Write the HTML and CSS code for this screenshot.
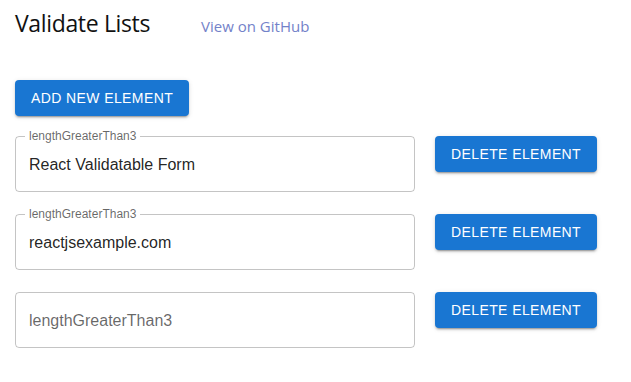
FILE: index.html
```html
<!DOCTYPE html>
<html lang="en">
<head>
<meta charset="utf-8">
<title>Validate Lists</title>
<link rel="stylesheet" href="styles.css">
</head>
<body>
<div class="page">
  <header class="header">
    <h1 class="title">Validate Lists</h1>
    <a class="link" href="#">View on GitHub</a>
  </header>
  <button class="btn btn-add" type="button">Add new element</button>
  <div class="list">
    <div class="row">
      <div class="field">
        <span class="field-label">lengthGreaterThan3</span>
        <span class="field-value">React Validatable Form</span>
      </div>
      <button class="btn" type="button">Delete element</button>
    </div>
    <div class="row">
      <div class="field">
        <span class="field-label">lengthGreaterThan3</span>
        <span class="field-value">reactjsexample.com</span>
      </div>
      <button class="btn" type="button">Delete element</button>
    </div>
    <div class="row">
      <div class="field">
        <span class="field-placeholder">lengthGreaterThan3</span>
      </div>
      <button class="btn" type="button">Delete element</button>
    </div>
  </div>
</div>
</body>
</html>
```

FILE: styles.css
```css
html, body {
  margin: 0;
  padding: 0;
  background: #ffffff;
}

.page {
  padding: 7px 15px 0 15px;
  display: flex;
  flex-direction: column;
  align-items: flex-start;
}

.header {
  display: flex;
  align-items: baseline;
  height: 32px;
}

.title {
  margin: 0;
  font-family: "Open Sans", sans-serif;
  font-weight: 400;
  font-size: 23px;
  letter-spacing: -0.35px;
  line-height: 32px;
  color: #111111;
}

.link {
  margin-left: 51px;
  font-family: "Open Sans", sans-serif;
  font-size: 15px;
  line-height: 32px;
  color: #7382c9;
  text-decoration: none;
}

.btn {
  font-family: "Liberation Sans", Arial, sans-serif;
  font-size: 14px;
  font-weight: 400;
  letter-spacing: 0.4px;
  line-height: 24px;
  text-transform: uppercase;
  color: #ffffff;
  background: #1976d2;
  border: 0;
  border-radius: 4px;
  padding: 6px 16px;
  margin: 0;
  box-shadow: 0px 3px 1px -2px rgba(0,0,0,0.2), 0px 2px 2px 0px rgba(0,0,0,0.14), 0px 1px 5px 0px rgba(0,0,0,0.12);
  cursor: pointer;
  white-space: nowrap;
}

.btn-add {
  margin-top: 41px;
}

.list {
  margin-top: 20px;
  display: flex;
  flex-direction: column;
  gap: 22px;
}

.row {
  display: flex;
  align-items: flex-start;
  gap: 20px;
}

.field {
  position: relative;
  box-sizing: border-box;
  width: 400px;
  height: 56px;
  border: 1px solid rgba(0,0,0,0.23);
  border-radius: 4px;
  padding: 0 13px;
  display: flex;
  align-items: center;
  font-family: "Liberation Sans", Arial, sans-serif;
}

.field-label {
  position: absolute;
  left: 9px;
  top: -8px;
  padding: 0 4px;
  background: #ffffff;
  font-size: 12px;
  line-height: 14px;
  color: rgba(0,0,0,0.6);
}

.field-value {
  font-size: 16px;
  line-height: 23px;
  color: rgba(0,0,0,0.87);
}

.field-placeholder {
  font-size: 16px;
  line-height: 23px;
  color: rgba(0,0,0,0.6);
}
```
